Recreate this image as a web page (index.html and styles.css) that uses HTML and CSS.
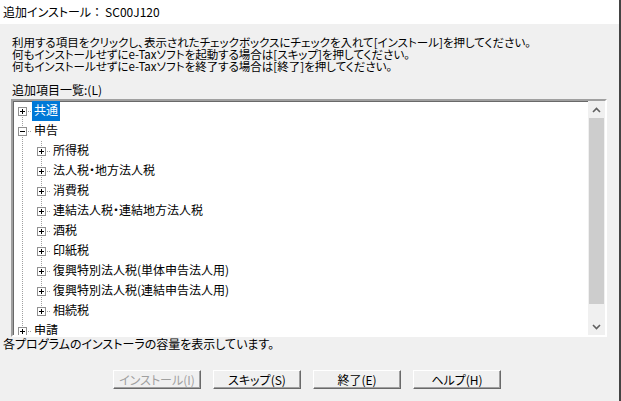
FILE: index.html
```html
<!DOCTYPE html>
<html lang="ja">
<head>
<meta charset="utf-8">
<title>追加インストール</title>
<link rel="stylesheet" href="styles.css">
</head>
<body>
<div class="window">
  <div class="titlebar">追加インストール<span class="colon">：</span>SC00J120</div>
  <div class="content">
    <div class="instructions">
      <p>利用する項目をクリックし、表示されたチェックボックスにチェックを入れて[インストール]を押してください。</p>
      <p>何もインストールせずにe-Taxソフトを起動する場合は[スキップ]を押してください。</p>
      <p>何もインストールせずにe-Taxソフトを終了する場合は[終了]を押してください。</p>
    </div>
    <div class="list-label">追加項目一覧:(L)</div>
    <div class="treebox">
      <div class="tree">
        <ul class="root">
          <li class="node">
            <div class="row"><span class="exp plus"></span><span class="dash"></span><span class="lbl sel">共通</span></div>
          </li>
          <li class="node">
            <div class="row"><span class="exp"></span><span class="dash"></span><span class="lbl">申告</span></div>
            <ul class="kids">
              <li class="node"><div class="row"><span class="exp plus"></span><span class="dash"></span><span class="lbl">所得税</span></div></li>
              <li class="node"><div class="row"><span class="exp plus"></span><span class="dash"></span><span class="lbl">法人税・地方法人税</span></div></li>
              <li class="node"><div class="row"><span class="exp plus"></span><span class="dash"></span><span class="lbl">消費税</span></div></li>
              <li class="node"><div class="row"><span class="exp plus"></span><span class="dash"></span><span class="lbl">連結法人税・連結地方法人税</span></div></li>
              <li class="node"><div class="row"><span class="exp plus"></span><span class="dash"></span><span class="lbl">酒税</span></div></li>
              <li class="node"><div class="row"><span class="exp plus"></span><span class="dash"></span><span class="lbl">印紙税</span></div></li>
              <li class="node"><div class="row"><span class="exp plus"></span><span class="dash"></span><span class="lbl">復興特別法人税(単体申告法人用)</span></div></li>
              <li class="node"><div class="row"><span class="exp plus"></span><span class="dash"></span><span class="lbl">復興特別法人税(連結申告法人用)</span></div></li>
              <li class="node"><div class="row"><span class="exp plus"></span><span class="dash"></span><span class="lbl">相続税</span></div></li>
            </ul>
          </li>
          <li class="node">
            <div class="row"><span class="exp plus"></span><span class="dash"></span><span class="lbl">申請</span></div>
          </li>
        </ul>
      </div>
      <div class="scrollbar">
        <div class="sb-btn">
          <svg width="9" height="6" viewBox="0 0 9 6"><path d="M1 5 L4.5 1.5 L8 5" fill="none" stroke="#606060" stroke-width="1.6"/></svg>
        </div>
        <div class="sb-track"><div class="sb-thumb"></div></div>
        <div class="sb-btn">
          <svg width="9" height="6" viewBox="0 0 9 6"><path d="M1 1 L4.5 4.5 L8 1" fill="none" stroke="#606060" stroke-width="1.6"/></svg>
        </div>
      </div>
    </div>
    <div class="status">各プログラムのインストーラの容量を表示しています。</div>
    <div class="buttons">
      <button class="btn" disabled>インストール(I)</button>
      <button class="btn">スキップ(S)</button>
      <button class="btn">終了(E)</button>
      <button class="btn">ヘルプ(H)</button>
    </div>
  </div>
</div>
</body>
</html>
```
FILE: styles.css
```css
* { box-sizing: border-box; }
html, body {
  margin: 0;
  padding: 0;
}
body {
  width: 621px;
  height: 401px;
  background: #f0f0f0;
  font-family: "Noto Sans CJK JP", "Noto Sans", sans-serif;
  font-size: 12px;
  color: #000;
  font-feature-settings: "palt";
  overflow: hidden;
}
.window {
  width: 621px;
  height: 401px;
  border-right: 2px solid #434343;
  display: flex;
  flex-direction: column;
}
.titlebar {
  height: 24px;
  background: #fff;
  padding-left: 3px;
  line-height: 24px;
  flex: none;
  white-space: nowrap;
}
.colon {
  font-feature-settings: normal;
  margin-right: 2px;
}
.content {
  padding-left: 11px;
  display: flex;
  flex-direction: column;
}
.instructions {
  margin-top: 12px;
  margin-left: 1px;
  font-size: 11.5px;
}
.instructions p {
  margin: 0;
  line-height: 12px;
  height: 12px;
  white-space: nowrap;
}
.list-label {
  margin-top: 11px;
  margin-left: 1px;
  line-height: 14px;
  height: 14px;
}
.treebox {
  margin-top: 2px;
  width: 596px;
  height: 238px;
  background: #fff;
  border: 2px solid;
  border-color: #a0a0a0 #fff #fff #a0a0a0;
  box-shadow: inset 1px 1px 0 #696969;
  display: flex;
}
.tree {
  flex: 1;
  overflow: hidden;
}
.tree ul {
  list-style: none;
  margin: 0;
  padding: 0;
}
.node {
  position: relative;
}
.row {
  height: 20px;
  display: flex;
  align-items: center;
  padding-left: 5px;
}
.kids .row {
  padding-left: 24px;
}
.exp {
  width: 9px;
  height: 9px;
  border: 1px solid #919191;
  background: #fff;
  position: relative;
  z-index: 1;
  flex: none;
}
.exp::before {
  content: "";
  position: absolute;
  left: 1px;
  top: 3px;
  width: 5px;
  height: 1px;
  background: #000;
}
.exp.plus::after {
  content: "";
  position: absolute;
  left: 3px;
  top: 1px;
  width: 1px;
  height: 5px;
  background: #000;
}
.dash {
  width: 5px;
  height: 1px;
  flex: none;
  background-image: linear-gradient(to right, transparent 1px, #a0a0a0 1px);
  background-size: 2px 1px;
}
.lbl {
  padding: 0 2px 2px;
  height: 20px;
  line-height: 18px;
  white-space: nowrap;
}
.lbl.sel {
  background: #0078d7;
  color: #fff;
}
.root > .node::before,
.kids > .node::before {
  content: "";
  position: absolute;
  top: 0;
  bottom: 0;
  width: 1px;
  background-image: linear-gradient(to bottom, #a0a0a0 1px, transparent 1px);
  background-size: 1px 2px;
}
.root > .node::before { left: 9px; }
.kids > .node::before { left: 28px; }
.root > .node:first-child::before { top: 10px; }
.root > .node:last-child::before,
.kids > .node:last-child::before {
  bottom: auto;
  height: 10px;
}
.scrollbar {
  width: 17px;
  flex: none;
  background: #f0f0f0;
  display: flex;
  flex-direction: column;
}
.sb-btn {
  height: 17px;
  flex: none;
  display: flex;
  align-items: center;
  justify-content: center;
}
.sb-track {
  flex: 1;
  display: flex;
  flex-direction: column;
  padding: 0 1px;
}
.sb-thumb {
  height: 186px;
  background: #cdcdcd;
}
.status {
  margin-left: -8px;
  line-height: 14px;
  height: 14px;
}
.buttons {
  margin-top: 19px;
  margin-left: 102px;
  display: flex;
  gap: 12px;
}
.btn {
  width: 88px;
  height: 19px;
  padding: 0;
  font-family: inherit;
  font-size: 12px;
  font-feature-settings: "palt";
  line-height: 15px;
  color: #000;
  background: #f0f0f0;
  border: 1px solid;
  border-color: #fff #696969 #696969 #fff;
  box-shadow: inset -1px -1px 0 #a0a0a0;
  border-radius: 0;
}
.btn:disabled {
  color: #a0a0a0;
}
```
